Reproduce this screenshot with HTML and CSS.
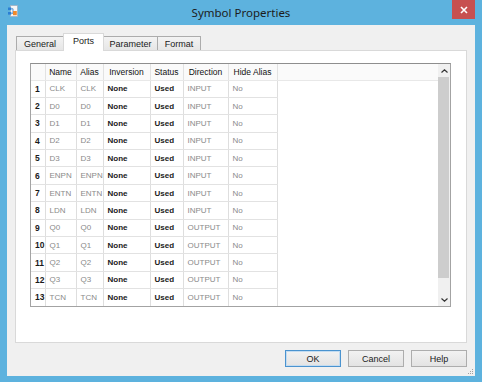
FILE: index.html
```html
<!DOCTYPE html>
<html lang="en">

<head>
    <meta charset="UTF-8">
    <title>Symbol Properties</title>
    <link rel="stylesheet" href="styles.css">
</head>

<body>
    <div class="window">
        <div class="titlebar">
            <div class="app-icon">
                <svg width="10" height="12" viewBox="0 0 10 12">
                    <rect x="2.5" y="0.5" width="7" height="11" fill="#f6f6f6" stroke="#9fb0c2" stroke-width="0.8"/>
                    <rect x="0" y="2.5" width="3.2" height="2.6" fill="#2a7fd4"/>
                    <rect x="0" y="7" width="3.2" height="2.6" fill="#2a7fd4"/>
                    <path d="M3.2 3.8 H5 V8.3 H3.2" fill="none" stroke="#2a7fd4" stroke-width="0.8"/>
                    <rect x="5" y="6" width="3.8" height="4.2" fill="#f0892a"/>
                </svg>
            </div>
            <div class="title">Symbol Properties</div>
            <div class="close-btn">
                <svg width="8" height="8" viewBox="0 0 8 8">
                    <path d="M1 1 L7 7 M7 1 L1 7" stroke="#fff" stroke-width="1.6"/>
                </svg>
            </div>
        </div>

        <div class="client">
            <div class="tabs">
                <div class="tab tab-general">General</div>
                <div class="tab tab-ports active">Ports</div>
                <div class="tab tab-parameter">Parameter</div>
                <div class="tab tab-format">Format</div>
            </div>

            <div class="panel">
                <div class="list">
                    <div class="list-body">
                        <table class="ports">
                            <colgroup>
                                <col class="c-num">
                                <col class="c-name">
                                <col class="c-alias">
                                <col class="c-inv">
                                <col class="c-status">
                                <col class="c-dir">
                                <col class="c-hide">
                                <col>
                            </colgroup>
                            <thead>
                                <tr>
                                    <th></th>
                                    <th>Name</th>
                                    <th>Alias</th>
                                    <th>Inversion</th>
                                    <th>Status</th>
                                    <th>Direction</th>
                                    <th>Hide Alias</th>
                                    <th class="filler"></th>
                                </tr>
                            </thead>
                            <tbody>
                                <tr><td class="num">1</td><td class="dim">CLK</td><td class="dim">CLK</td><td class="strong">None</td><td class="strong">Used</td><td class="dim">INPUT</td><td class="dim">No</td><td class="filler"></td></tr>
                                <tr><td class="num">2</td><td class="dim">D0</td><td class="dim">D0</td><td class="strong">None</td><td class="strong">Used</td><td class="dim">INPUT</td><td class="dim">No</td><td class="filler"></td></tr>
                                <tr><td class="num">3</td><td class="dim">D1</td><td class="dim">D1</td><td class="strong">None</td><td class="strong">Used</td><td class="dim">INPUT</td><td class="dim">No</td><td class="filler"></td></tr>
                                <tr><td class="num">4</td><td class="dim">D2</td><td class="dim">D2</td><td class="strong">None</td><td class="strong">Used</td><td class="dim">INPUT</td><td class="dim">No</td><td class="filler"></td></tr>
                                <tr><td class="num">5</td><td class="dim">D3</td><td class="dim">D3</td><td class="strong">None</td><td class="strong">Used</td><td class="dim">INPUT</td><td class="dim">No</td><td class="filler"></td></tr>
                                <tr><td class="num">6</td><td class="dim">ENPN</td><td class="dim">ENPN</td><td class="strong">None</td><td class="strong">Used</td><td class="dim">INPUT</td><td class="dim">No</td><td class="filler"></td></tr>
                                <tr><td class="num">7</td><td class="dim">ENTN</td><td class="dim">ENTN</td><td class="strong">None</td><td class="strong">Used</td><td class="dim">INPUT</td><td class="dim">No</td><td class="filler"></td></tr>
                                <tr><td class="num">8</td><td class="dim">LDN</td><td class="dim">LDN</td><td class="strong">None</td><td class="strong">Used</td><td class="dim">INPUT</td><td class="dim">No</td><td class="filler"></td></tr>
                                <tr><td class="num">9</td><td class="dim">Q0</td><td class="dim">Q0</td><td class="strong">None</td><td class="strong">Used</td><td class="dim">OUTPUT</td><td class="dim">No</td><td class="filler"></td></tr>
                                <tr><td class="num">10</td><td class="dim">Q1</td><td class="dim">Q1</td><td class="strong">None</td><td class="strong">Used</td><td class="dim">OUTPUT</td><td class="dim">No</td><td class="filler"></td></tr>
                                <tr><td class="num">11</td><td class="dim">Q2</td><td class="dim">Q2</td><td class="strong">None</td><td class="strong">Used</td><td class="dim">OUTPUT</td><td class="dim">No</td><td class="filler"></td></tr>
                                <tr><td class="num">12</td><td class="dim">Q3</td><td class="dim">Q3</td><td class="strong">None</td><td class="strong">Used</td><td class="dim">OUTPUT</td><td class="dim">No</td><td class="filler"></td></tr>
                                <tr><td class="num">13</td><td class="dim">TCN</td><td class="dim">TCN</td><td class="strong">None</td><td class="strong">Used</td><td class="dim">OUTPUT</td><td class="dim">No</td><td class="filler"></td></tr>
                            </tbody>
                        </table>
                    </div>

                    <div class="scrollbar">
                        <div class="sb-arrow">
                            <svg width="7" height="4" viewBox="0 0 7 4"><path d="M0.5 3.5 L3.5 0.8 L6.5 3.5" fill="none" stroke="#333" stroke-width="1.2"/></svg>
                        </div>
                        <div class="sb-thumb"></div>
                        <div class="sb-track"></div>
                        <div class="sb-arrow">
                            <svg width="7" height="4" viewBox="0 0 7 4"><path d="M0.5 0.5 L3.5 3.2 L6.5 0.5" fill="none" stroke="#333" stroke-width="1.2"/></svg>
                        </div>
                    </div>
                </div>
            </div>

            <div class="buttons">
                <button class="btn default">OK</button>
                <button class="btn">Cancel</button>
                <button class="btn">Help</button>
            </div>

            <div class="grip">
                <svg width="7" height="7" viewBox="0 0 7 7">
                    <rect x="5" y="1" width="1" height="1" fill="#a0a0a0"/>
                    <rect x="3" y="3" width="1" height="1" fill="#a0a0a0"/>
                    <rect x="5" y="3" width="1" height="1" fill="#a0a0a0"/>
                    <rect x="1" y="5" width="1" height="1" fill="#a0a0a0"/>
                    <rect x="3" y="5" width="1" height="1" fill="#a0a0a0"/>
                    <rect x="5" y="5" width="1" height="1" fill="#a0a0a0"/>
                </svg>
            </div>
        </div>
    </div>
</body>

</html>
```

FILE: styles.css
```css
* {
    box-sizing: border-box;
}

body {
    margin: 0;
    font-family: "Liberation Sans", Arial, sans-serif;
}

.window {
    width: 482px;
    height: 382px;
    background-color: #5db2de;
    display: flex;
    flex-direction: column;
}

/* title bar */
.titlebar {
    height: 25px;
    display: grid;
    grid-template-columns: 1fr auto 1fr;
    align-items: start;
}

.app-icon {
    padding: 5px 0 0 8px;
    line-height: 0;
}

.title {
    font-family: "Noto Sans", "Open Sans", sans-serif;
    font-size: 11.5px;
    line-height: 26px;
    color: #1c1c1c;
}

.close-btn {
    justify-self: end;
    width: 23px;
    height: 19px;
    margin-right: 7px;
    background-color: #c75050;
    display: flex;
    align-items: center;
    justify-content: center;
}

/* client area */
.client {
    flex: 1;
    margin: 0 7px 6px;
    background-color: #f0f0f0;
    padding: 8px 8px 9px;
    display: flex;
    flex-direction: column;
    position: relative;
}

.tabs {
    display: flex;
    align-items: flex-end;
    height: 18px;
    margin-bottom: -1px;
    padding-left: 1px;
}

.tab {
    height: 14px;
    margin-bottom: 1px;
    margin-right: -1px;
    border: 1px solid #acacac;
    border-bottom: none;
    background: linear-gradient(#f3f3f3, #e6e6e6);
    font-size: 9px;
    line-height: 14px;
    text-align: center;
    color: #1a1a1a;
}

.tab-general {
    width: 48px;
}

.tab-ports {
    width: 41px;
}

.tab-parameter {
    width: 55px;
}

.tab-format {
    width: 44px;
}

.tab.active {
    height: 18px;
    margin-bottom: 0;
    background: #fff;
    border-color: #d9d9d9;
    position: relative;
    z-index: 1;
    line-height: 14px;
}

.panel {
    flex: 1;
    background-color: #fff;
    border: 1px solid #d9d9d9;
    padding: 12px 15px 0 14px;
}

/* port list */
.list {
    height: 244px;
    border: 1px solid #a3a3a3;
    border-top-color: #8e8e8e;
    display: flex;
}

.list-body {
    flex: 1;
    overflow: hidden;
}

.ports {
    width: 100%;
    border-collapse: collapse;
    table-layout: fixed;
    font-size: 8px;
}

.c-num { width: 14px; }
.c-name { width: 31px; }
.c-alias { width: 27px; }
.c-inv { width: 47px; }
.c-status { width: 33px; }
.c-dir { width: 45px; }
.c-hide { width: 49px; }

.ports th {
    height: 16px;
    padding: 0;
    font-size: 8.5px;
    font-weight: normal;
    color: #111;
    text-align: center;
    background-color: #fafafa;
    border-right: 1px solid #e2e2e2;
    border-bottom: 1px solid #e8e8e8;
    white-space: nowrap;
}

.ports td {
    height: 17.4px;
    padding: 0 0 0 4px;
    border-right: 1px solid #dedede;
    border-bottom: 1px solid #e2e2e2;
    white-space: nowrap;
    overflow: hidden;
}

.ports td.num {
    font-size: 8.5px;
    font-weight: bold;
    color: #1a1a1a;
}

.ports td.dim {
    color: #8a8a8a;
}

.ports td.strong {
    font-weight: bold;
    color: #1a1a1a;
}

.ports .filler {
    border-right: none;
}

.ports td.filler {
    border-bottom: none;
}

/* scrollbar */
.scrollbar {
    width: 12px;
    background-color: #f0f0f0;
    display: flex;
    flex-direction: column;
}

.sb-arrow {
    height: 13px;
    display: flex;
    align-items: center;
    justify-content: center;
}

.sb-thumb {
    height: 201px;
    margin: 0 1px 0 0;
    background-color: #cdcdcd;
}

.sb-track {
    flex: 1;
}

/* dialog buttons */
.buttons {
    display: flex;
    justify-content: flex-end;
    gap: 7px;
    margin-top: 7px;
}

.btn {
    width: 56px;
    height: 17px;
    padding: 0;
    border: 1px solid #adadad;
    background: linear-gradient(#f2f2f2, #e3e3e3);
    font-family: "Liberation Sans", Arial, sans-serif;
    font-size: 9px;
    color: #1a1a1a;
}

.btn.default {
    border-color: #4a93cf;
    box-shadow: inset 0 0 0 1px #c3dcf1;
}

.grip {
    position: absolute;
    right: 1px;
    bottom: 1px;
    line-height: 0;
}
```
